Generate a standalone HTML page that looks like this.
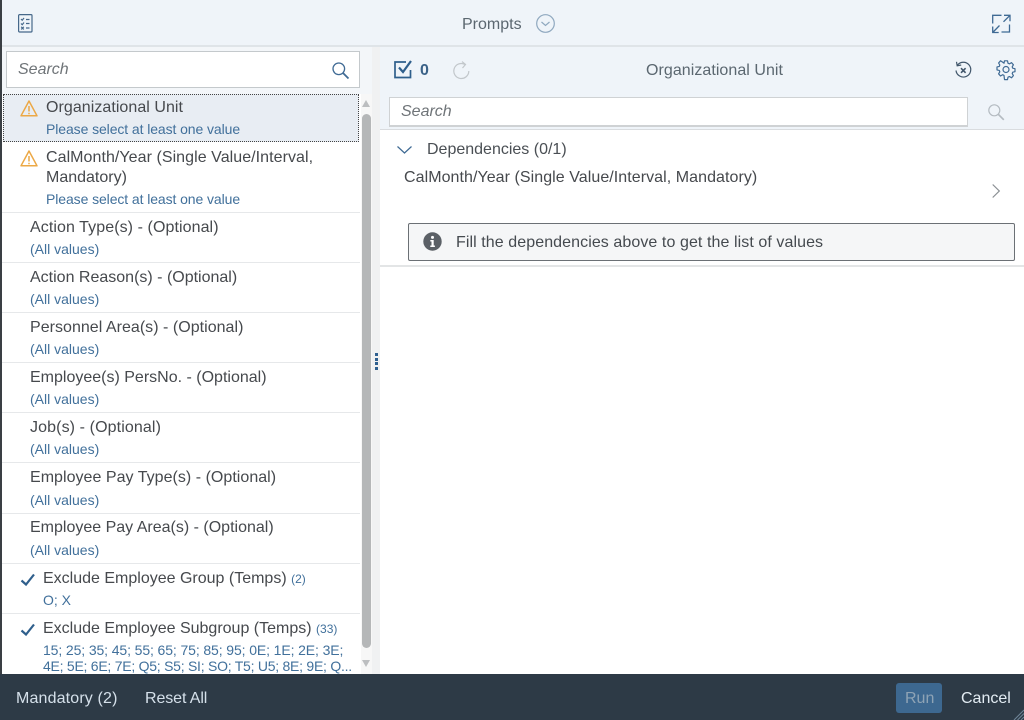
<!DOCTYPE html>
<html><head><meta charset="utf-8"><title>Prompts</title>
<style>
html,body{margin:0;padding:0;width:1024px;height:720px;overflow:hidden;background:#fff;font-family:"Liberation Sans",sans-serif;}
.a{position:absolute;white-space:nowrap;}
.t{font-size:16px;color:#46494d;line-height:20px;margin-top:1px;}
.s{font-size:14px;color:#41709b;line-height:18px;margin-top:-1px;}
.l{position:absolute;left:2px;width:358px;height:1px;background:#e6e8ea;}
svg{position:absolute;overflow:visible;fill:none;}
</style></head><body>
<div class="a" style="left:0;top:0;width:1024px;height:46px;background:#eff4f9;"></div>
<div class="a" style="left:0;top:45px;width:1024px;height:2px;background:#dfe4e8;"></div>
<div class="a" style="left:0;top:47px;width:380px;height:47px;background:#f3f6f9;"></div>
<div class="a" style="left:380px;top:47px;width:644px;height:82px;background:#eff4f9;"></div>
<div class="a" style="left:380px;top:129px;width:644px;height:1px;background:#d9dcdf;"></div>
<div class="a" style="left:0;top:0;width:2px;height:680px;background:#3a3f44;"></div>

<svg style="left:18px;top:14px" width="15" height="19" stroke="#46688a" stroke-width="1.2"><rect x=".6" y=".6" width="13.4" height="17.4" rx="1"/><path d="M3 5l1.2 1.2L6 4M8 5.500h3.500M3 9.500l1.200 1.200L6 8.500M8 9.500h3.500M3.200 12.800l2.600 2.600M5.800 12.800l-2.600 2.600M8 14h3.500"/></svg>
<div class="a" style="left:462px;top:15px;font-size:16px;line-height:20px;color:#5b6770;">Prompts</div>
<svg style="left:536px;top:14px" width="19" height="19" stroke="#8fa8bf" stroke-width="1.200"><circle cx="9.500" cy="9.500" r="8.800"/><path d="M5.500 8l4 3.500 4-3.500"/></svg>
<svg style="left:992px;top:14px" width="19" height="19" stroke="#3f6a94" stroke-width="1.300"><path d="M.7 9.500V1.300H9.500M12 1.300h6v6M18 1.300L11.500 7.800M.7 12.500v6h6M.7 18.500L7.500 11.500M17.500 10.500v7.500H9.500"/></svg>

<div class="a" style="left:6px;top:51px;width:352px;height:35px;background:#fff;border:1px solid #c4c9cc;"></div>
<div class="a" style="left:18px;top:60px;font-size:16px;line-height:20px;font-style:italic;color:#6f7478;">Search</div>
<svg style="left:332px;top:62px" width="18" height="18" stroke="#3f6a94" stroke-width="1.300"><circle cx="6.800" cy="6.800" r="5.800"/><path d="M11 11l5.500 5.500" stroke-width="1.800"/></svg>

<!-- list -->
<div class="a" style="left:3px;top:94px;width:354px;height:46px;background:#e8edf3;border:1px dotted #444;"></div>
<svg style="left:20px;top:100px" width="18" height="17" stroke="#eca845" stroke-width="1.500"><path d="M9 1L17 15.800H1z" stroke-linejoin="round"/><path d="M9 6v5.500M9 12.800v1.500" stroke-width="1.500"/></svg>
<div class="a t" style="left:46px;top:97px;letter-spacing:.05px;">Organizational Unit</div>
<div class="a s" style="left:46px;top:121px;letter-spacing:-.09px;">Please select at least one value</div>
<svg style="left:20px;top:150px" width="18" height="17" stroke="#eca845" stroke-width="1.500"><path d="M9 1L17 15.800H1z" stroke-linejoin="round"/><path d="M9 6v5.500M9 12.800v1.500" stroke-width="1.500"/></svg>
<div class="a t" style="left:46px;top:147px;letter-spacing:.055px;">CalMonth/Year (Single Value/Interval,</div>
<div class="a t" style="left:46px;top:167px;">Mandatory)</div>
<div class="a s" style="left:46px;top:191px;letter-spacing:-.09px;">Please select at least one value</div>
<div class="l" style="top:212px"></div>
<div class="a t" style="left:30px;top:217px;letter-spacing:.08px;">Action Type(s) - (Optional)</div>
<div class="a s" style="left:30px;top:241px;">(All values)</div>
<div class="l" style="top:262px"></div>
<div class="a t" style="left:30px;top:267px;">Action Reason(s) - (Optional)</div>
<div class="a s" style="left:30px;top:291px;">(All values)</div>
<div class="l" style="top:312px"></div>
<div class="a t" style="left:30px;top:317px;letter-spacing:.03px;">Personnel Area(s) - (Optional)</div>
<div class="a s" style="left:30px;top:341px;">(All values)</div>
<div class="l" style="top:362px"></div>
<div class="a t" style="left:30px;top:367px;">Employee(s) PersNo. - (Optional)</div>
<div class="a s" style="left:30px;top:391px;">(All values)</div>
<div class="l" style="top:412px"></div>
<div class="a t" style="left:30px;top:417px;letter-spacing:.11px;">Job(s) - (Optional)</div>
<div class="a s" style="left:30px;top:441px;">(All values)</div>
<div class="l" style="top:462px"></div>
<div class="a t" style="left:30px;top:467px;letter-spacing:.03px;">Employee Pay Type(s) - (Optional)</div>
<div class="a s" style="left:30px;top:492px;">(All values)</div>
<div class="l" style="top:513px"></div>
<div class="a t" style="left:30px;top:517px;">Employee Pay Area(s) - (Optional)</div>
<div class="a s" style="left:30px;top:542px;">(All values)</div>
<div class="l" style="top:563px"></div>
<svg style="left:21px;top:573px" width="14" height="14" stroke="#2f5f8c" stroke-width="2.200"><path d="M.5 7.500l4.500 4L13 1.500"/></svg>
<div class="a t" style="left:43px;top:568px;">Exclude Employee Group (Temps) <span style="font-size:12px;color:#41709b;">(2)</span></div>
<div class="a s" style="left:43px;top:592px;">O; X</div>
<div class="l" style="top:613px"></div>
<svg style="left:21px;top:623px" width="14" height="14" stroke="#2f5f8c" stroke-width="2.200"><path d="M.5 7.500l4.500 4L13 1.500"/></svg>
<div class="a t" style="left:43px;top:618px;">Exclude Employee Subgroup (Temps) <span style="font-size:12px;color:#41709b;">(33)</span></div>
<div class="a s" style="left:43px;top:642px;line-height:16px;margin-top:0;letter-spacing:-.11px;">15; 25; 35; 45; 55; 65; 75; 85; 95; 0E; 1E; 2E; 3E;<br><span style="letter-spacing:-.25px;">4E; 5E; 6E; 7E; Q5; S5; SI; SO; T5; U5; 8E; 9E; Q...</span></div>

<!-- scrollbar -->
<div class="a" style="left:361px;top:94px;width:11px;height:580px;background:#f7f7f7;"></div>
<div class="a" style="left:362px;top:114px;width:9px;height:534px;border-radius:5px;background:#b5b7b8;"></div>
<div class="a" style="left:362px;top:100px;width:0;height:0;border-left:4px solid transparent;border-right:4px solid transparent;border-bottom:7px solid #bcbec0;"></div>
<div class="a" style="left:362px;top:660px;width:0;height:0;border-left:4px solid transparent;border-right:4px solid transparent;border-top:7px solid #bcbec0;"></div>
<!-- splitter -->
<div class="a" style="left:372px;top:47px;width:8px;height:627px;background:#f0f1f2;"></div>
<div class="a" style="left:375px;top:353px;width:3px;height:3px;background:#2e5f8f;"></div>
<div class="a" style="left:375px;top:358px;width:3px;height:3px;background:#2e5f8f;"></div>
<div class="a" style="left:375px;top:362px;width:3px;height:3px;background:#2e5f8f;"></div>
<div class="a" style="left:375px;top:367px;width:3px;height:3px;background:#2e5f8f;"></div>

<!-- right toolbar -->
<svg style="left:394px;top:60px" width="19" height="19" stroke="#2f5f8c" stroke-width="1.700"><path d="M16.500 10v7.500H1V2h11"/><path d="M5 7.500l4 4.500L17 1" stroke-width="2.200"/></svg>
<div class="a" style="left:420px;top:61px;font-size:16px;line-height:20px;font-weight:bold;color:#3b6288;">0</div>
<svg style="left:452px;top:61px" width="18" height="18" stroke="#c2c7cb" stroke-width="1.200"><path d="M13 3.500A7.500 7.500 0 1 0 16.800 10"/><path d="M10 .6L13.500 3.500 10.500 7"/></svg>
<div class="a" style="left:646px;top:61px;font-size:16px;line-height:20px;color:#5b6770;letter-spacing:.05px;">Organizational Unit</div>
<svg style="left:955px;top:61px" width="17" height="18" stroke="#41566b" stroke-width="1.200"><path d="M2.200 4.500A7.400 7.400 0 1 1 1 9.500"/><path d="M1.500 .8L2.200 4.800 6.200 4"/><path d="M6 7.200l4.600 4.600M10.600 7.200L6 11.800" stroke-width="1.600"/></svg>
<svg style="left:997px;top:60px" width="18" height="19" stroke="#3f6a94" stroke-width="1.200"><circle cx="9" cy="9.500" r="3"/><path d="M7.500 1h3l.5 2.400 1.400.7 2.100-1.300 1.900 2.200-1.200 2 .5 1.400 2.300.5v3l-2.300.5-.5 1.400 1.200 2-1.900 2.200-2.100-1.300-1.400.7-.5 2.400h-3L7 15.600l-1.400-.7-2.100 1.300-1.900-2.200 1.200-2-.5-1.400L0 10.100v-3l2.300-.5.500-1.400-1.200-2 1.900-2.200 2.100 1.300L7 3.400z" stroke-linejoin="round" transform="translate(0 -.2)"/></svg>

<div class="a" style="left:389px;top:97px;width:577px;height:27px;background:#fff;border:1px solid #cfd2d4;border-bottom-width:2px;"></div>
<div class="a" style="left:401px;top:102px;font-size:16px;line-height:20px;font-style:italic;color:#6f7478;">Search</div>
<svg style="left:988px;top:104px" width="17" height="17" stroke="#b4bbc1" stroke-width="1.200"><circle cx="6.300" cy="6.300" r="5.500"/><path d="M10.300 10.300l5.500 5.500" stroke-width="1.700"/></svg>

<svg style="left:397px;top:146px" width="15" height="8" stroke="#3f6a94" stroke-width="1.200"><path d="M.5.500L7.500 7 14.500.500"/></svg>
<div class="a" style="left:427px;top:140px;font-size:16px;line-height:20px;color:#4a4f54;">Dependencies (0/1)</div>
<div class="a t" style="left:404px;top:167px;letter-spacing:.06px;">CalMonth/Year (Single Value/Interval, Mandatory)</div>
<svg style="left:992px;top:184px" width="8" height="14" stroke="#8a8f93" stroke-width="1.200"><path d="M.7.500L7.300 7 .7 13.500"/></svg>

<div class="a" style="left:408px;top:223px;width:605px;height:36px;background:#f5f6f7;border:1px solid #6b7075;border-radius:2px;"></div>
<svg style="left:423px;top:232px" width="19" height="19"><circle cx="9.500" cy="9.500" r="9.200" fill="#5b6066"/><circle cx="9.500" cy="5.400" r="1.500" fill="#fff"/><path d="M7.300 8h3.400v5.500h1.200v1.500H7.300v-1.500h1.200V9.500H7.300z" fill="#fff"/></svg>
<div class="a" style="left:456px;top:233px;font-size:16px;line-height:20px;color:#454a4f;letter-spacing:.08px;">Fill the dependencies above to get the list of values</div>
<div class="a" style="left:380px;top:265px;width:644px;height:2px;background:#e3e5e6;"></div>

<!-- footer -->
<div class="a" style="left:0;top:674px;width:1024px;height:46px;background:#2d3a46;"></div>
<div class="a" style="left:16px;top:689px;font-size:16px;line-height:20px;color:#d5e0ea;letter-spacing:.15px;">Mandatory (2)</div>
<div class="a" style="left:145px;top:689px;font-size:16px;line-height:20px;color:#d5e0ea;letter-spacing:-.1px;">Reset All</div>
<div class="a" style="left:896px;top:683px;width:46px;height:30px;background:#3d6890;border-radius:3px;"></div>
<div class="a" style="left:905px;top:689px;font-size:16px;line-height:20px;color:#8ea3b5;">Run</div>
<div class="a" style="left:961px;top:689px;font-size:16px;line-height:20px;color:#e3ecf3;">Cancel</div>
<svg style="left:1014px;top:710px" width="10" height="10" stroke="#6f8598" stroke-width="1"><path d="M0 10L10 0M3.500 10L10 3.500M7 10L10 7"/></svg>
</body></html>
